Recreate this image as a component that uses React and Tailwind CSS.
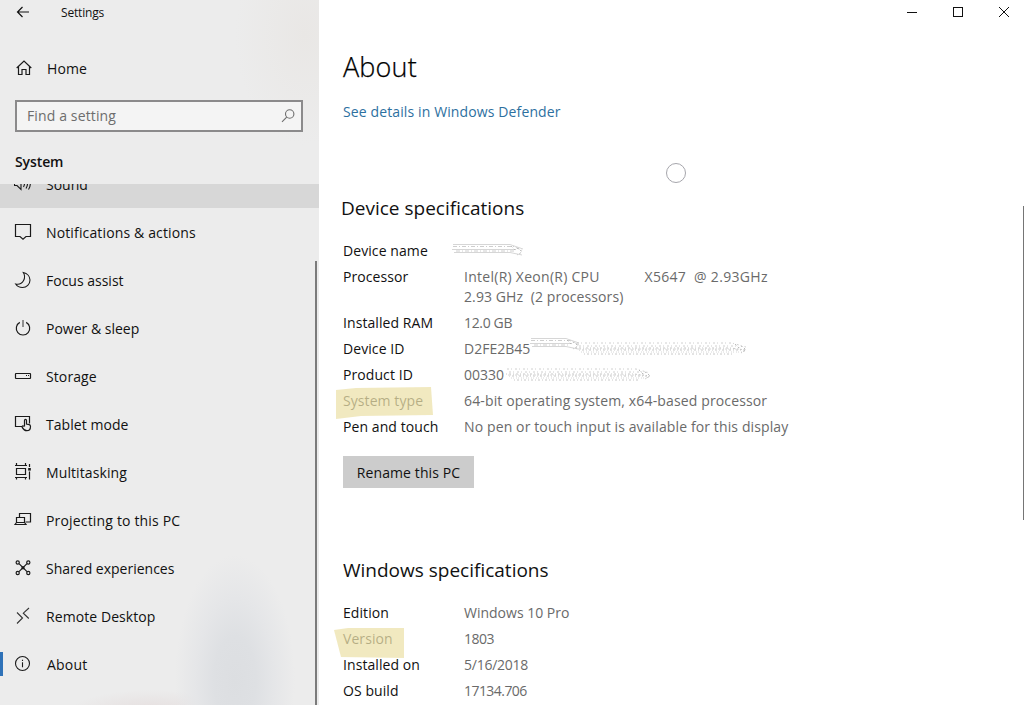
import React from "react";

function Icon({ children, className = "" }) {
  return (
    <svg
      viewBox="0 0 18 18"
      className={`h-[18px] w-[18px] shrink-0 ${className}`}
      fill="none"
      stroke="#1a1a1a"
      strokeWidth="1"
    >
      {children}
    </svg>
  );
}

const icons = {
  sound: (
    <Icon>
      <path d="M.5 6.500h2.500l4-4v12l-4-4H.5zM9.500 12c1.200-2 1.200-4.200 0-6M12 13.500c1.900-3 1.900-6.500 0-9.500M14.500 14.500c2.300-3.700 2.300-8 0-11.500" strokeWidth="1.100" />
    </Icon>
  ),
  notifications: (
    <Icon>
      <path d="M1.500 1.500h15v12h-4.500l-3 2.800-3-2.800h-4.500z" strokeWidth="1.200" />
    </Icon>
  ),
  focus: (
    <Icon>
      <path d="M9.300 1.500c4 .8 6.700 4 6.700 7.600 0 4.200-3.400 7.400-7.500 7.400-2.900 0-5.400-1.300-6.800-3.500 3.200.6 6.300-.5 7.900-3.500 1.400-2.700 1.200-5.700-.3-8z" strokeWidth="1.100" />
    </Icon>
  ),
  power: (
    <Icon>
      <path d="M9 1v7" stroke="#777" strokeWidth="1.600" />
      <path d="M5.800 3.400a6.700 6.700 0 1 0 6.400 0" strokeWidth="1.200" />
    </Icon>
  ),
  storage: (
    <Icon>
      <rect x="1.500" y="6.500" width="15" height="5" strokeWidth="1.200" rx=".5" />
      <path d="M12 8.500h1M14 8.500h1" strokeWidth="1.200" />
    </Icon>
  ),
  tablet: (
    <Icon>
      <path d="M8.500 11.500h-7v-10h14v7" strokeWidth="1.200" />
      <path d="M10.500 11V5.500c0-1.500 2-1.500 2 0V9l2.700.6c1 .3 1.300.9 1.300 1.800 0 2.600-.9 4.300-3.700 4.300-2.500 0-3.300-1-4.600-3.300-.5-1.300.7-2 1.400-1.200z" fill="#ececec" strokeWidth="1.200" />
    </Icon>
  ),
  multitasking: (
    <Icon>
      <path d="M1 2.500h12M2.500 0v2.500M11.500 0v2.500M2.500 5.500h9v6h-9zM1 14.500h12M2.500 14.500v2M11.500 14.500v2M15.500 1v3M15.500 8.500v8" strokeWidth="1.200" />
      <rect x="14.200" y="5" width="2.600" height="2.600" fill="#1a1a1a" stroke="none" />
    </Icon>
  ),
  projecting: (
    <Icon>
      <path d="M5.500 6V2.500h11v8.500h-5" strokeWidth="1.200" />
      <path d="M2.500 11.500V6.500h8v5M1 13.500l1.500-2h8l1.500 2z" strokeWidth="1.200" />
    </Icon>
  ),
  shared: (
    <Icon>
      <path d="M5 4.700l8 8M13 4.700l-8 8" strokeWidth="1.200" />
      <circle cx="3.700" cy="3.500" r="1.600" strokeWidth="1.200" />
      <circle cx="14.300" cy="3.500" r="1.600" strokeWidth="1.200" />
      <circle cx="3.700" cy="14" r="1.600" strokeWidth="1.200" />
      <circle cx="14.300" cy="14" r="1.600" strokeWidth="1.200" />
      <rect x="7.500" y="7.300" width="3" height="3" fill="#1a1a1a" stroke="none" />
    </Icon>
  ),
  remote: (
    <Icon>
      <path d="M3 5.500l5.500 5.500L3 16.500M15 1L9.300 6.200l5.500 5.300" stroke="#333" strokeWidth="1.100" />
    </Icon>
  ),
  about: (
    <Icon>
      <circle cx="8.500" cy="8.500" r="7" strokeWidth="1.100" />
      <path d="M8.500 7.300v5M8.500 4.800v1.200" strokeWidth="1.100" />
    </Icon>
  ),
};

const navItems = [
  { icon: "sound", label: "Sound", tone: "bg-[#d7d7d7]", tracking: "" },
  { icon: "notifications", label: "Notifications & actions", tracking: "tracking-[0.140px]" },
  { icon: "focus", label: "Focus assist", tracking: "" },
  { icon: "power", label: "Power & sleep", tracking: "" },
  { icon: "storage", label: "Storage", tracking: "tracking-[0.100px]" },
  { icon: "tablet", label: "Tablet mode", tracking: "tracking-[0.050px]" },
  { icon: "multitasking", label: "Multitasking", tracking: "tracking-[0.100px]" },
  { icon: "projecting", label: "Projecting to this PC", tracking: "tracking-[0.170px]" },
  { icon: "shared", label: "Shared experiences", tracking: "" },
  { icon: "remote", label: "Remote Desktop", tracking: "tracking-[0.080px]" },
  { icon: "about", label: "About", active: true, tracking: "tracking-[0.200px]" },
];

function NavItem({ icon, label, tone = "", active, tracking }) {
  return (
    <li className={`flex h-12 shrink-0 items-center ${tone}`}>
      <span className={`h-6 w-[3px] ${active ? "bg-[#2f72b8]" : ""}`} />
      <span className="ml-[11px] flex">{icons[icon]}</span>
      <span className={`whitespace-nowrap ${active ? "ml-[15px]" : "ml-3.5"} ${tracking}`}>{label}</span>
    </li>
  );
}

function Sidebar() {
  return (
    <aside className="relative flex w-[319px] shrink-0 flex-col overflow-hidden bg-[#ececec] bg-[radial-gradient(ellipse_60px_125px_at_235px_680px,#dcdee1_0%,#dee0e3_35%,#e5e6e8_65%,#ebebeb00_100%),radial-gradient(ellipse_80px_22px_at_150px_712px,#e5dede_0%,#ececec00_100%),radial-gradient(ellipse_70px_110px_at_305px_35px,#e9e7e5_0%,#ececec00_100%)]">
      <div className="flex h-[26px] items-center pl-[15px]">
        <svg viewBox="0 0 16 16" className="h-4 w-4 -translate-y-px" fill="none" stroke="#111" strokeWidth="1.200">
          <path d="M14 8H2.500M7.500 3L2.500 8l5 5" />
        </svg>
        <span className="ml-[30px] text-[12px] tracking-[-0.180px]">Settings</span>
      </div>
      <div className="mt-[18px] flex h-12 items-center pl-[15px]">
        <Icon>
          <path d="M1.700 9L9 2l7.300 7M3.500 7.500v8h3.500v-5h4v5h3.500v-8" strokeWidth="1.200" />
        </Icon>
        <span className="ml-3.5 tracking-[0.100px]">Home</span>
      </div>
      <div className="ml-[15px] mt-2 flex h-8 w-72 shrink-0 items-center justify-between border-2 border-[#8b8a8b] bg-[#f4f4f4] pl-2.5 pr-[5px] text-[#6d6d6d]">
        <span className="pb-0.5 tracking-[0.130px]">Find a setting</span>
        <svg viewBox="0 0 16 16" className="h-4 w-4" fill="none" stroke="#6d6d6d" strokeWidth="1.100">
          <circle cx="9.700" cy="6" r="4.200" />
          <path d="M6.700 9.200L2 13.900" />
        </svg>
      </div>
      <div className="mt-5 h-5 pl-[15px] font-semibold leading-5 tracking-[-0.100px]">System</div>
      <nav className="mt-3 flex-1 overflow-hidden">
        <ul className="-mt-6 flex flex-col">
          {navItems.map((item) => (
            <NavItem key={item.label} {...item} />
          ))}
        </ul>
      </nav>
      <div className="absolute bottom-0 right-[2px] top-[261px] w-[2px] bg-[#7b7b7b]" />
    </aside>
  );
}

/* Hand-scribbled redaction strokes over private values */
function Scribble({ width, lines, className = "" }) {
  const w = width;
  return (
    <svg viewBox={`0 0 ${w} 18`} width={w} height="18" className={`shrink-0 ${className}`} fill="none" strokeWidth=".8">
      {lines === "solid" ? (
        <>
          <path d={`M1 3.500H${w - 14}L${w - 1} 8M0 8.500H${w - 8}M2 11.500H${w - 14}L${w - 2} 14`} stroke="#cccccc" />
          <path d={`M1 5.500H${w - 10}L${w - 1} 10M4 10H${w - 10}`} stroke="#c2c2c2" strokeDasharray="4 2 1 2" />
          <path d={`M${w - 13} 5l4 4 3-2 4 4-5 3`} stroke="#b0b0b0" strokeDasharray="2 2" />
        </>
      ) : (
        <>
          <path d={`M1 4H${w - 16}L${w - 2} 8M3 7H${w - 9}`} stroke="#c4c4c4" strokeDasharray="2 2 1 3" />
          <path d={`M0 9H${w - 18}L${w - 2} 11M3 11H${w - 3}M8 15H${w - 14}`} stroke="#bababa" strokeDasharray="1 2 2 2" />
          <path d={`M2 10H${w - 8}M5 13H${w - 5}`} stroke="#cecece" strokeDasharray="1 1 1 2" />
          <path d={`M${w - 13} 5l4 4 3-2 4 4-5 3`} stroke="#a8a8a8" strokeDasharray="2 2" />
        </>
      )}
    </svg>
  );
}

function Row({ label, children, highlight, tracking = "" }) {
  return (
    <div className="flex items-start leading-5">
      <dt className="relative w-[121px] shrink-0 whitespace-nowrap tracking-[0.080px]">
        {label}
        {highlight}
      </dt>
      <dd className={`flex h-full whitespace-pre text-[#6a6a6a] ${tracking}`}>{children}</dd>
    </div>
  );
}

function Main() {
  return (
    <main className="relative min-w-0 flex-1 overflow-hidden bg-white pl-6">
      <div className="flex h-[26px] items-center justify-end gap-[34px] pr-3.5">
        <svg viewBox="0 0 12 12" className="h-3 w-3" stroke="#111">
          <path d="M1 5.500h10" />
        </svg>
        <svg viewBox="0 0 12 12" className="h-3 w-3 -translate-y-px" fill="none" stroke="#111">
          <rect x="1.500" y="1.500" width="9" height="9" />
        </svg>
        <svg viewBox="0 0 12 12" className="h-3 w-3 -translate-y-px" stroke="#111">
          <path d="M1 1l10 10M11 1L1 11" />
        </svg>
      </div>
      <h1 className="mt-[21px] h-10 text-[27px] font-light leading-10 tracking-[0.150px] text-black [-webkit-text-stroke:0.25px_black]">About</h1>
      <a className="mt-[15px] block h-5 leading-5 tracking-[0.120px] text-[#2d709f]">See details in Windows Defender</a>
      <div className="mt-[41px] flex h-5 pl-[323px]">
        <span className="h-5 w-5 rounded-full border border-[#a6a6ac]" />
      </div>
      <h2 className="-ml-[2px] mt-[11px] h-7 text-[19px] leading-7">Device specifications</h2>
      <dl className="mt-[19px] flex flex-col gap-1.5">
        <Row label="Device name">
          <Scribble width={72} lines="solid" className="-ml-[12px]" />
        </Row>
        <Row label="Processor">
          <div>
            <div className="flex">
              <span className="w-[180.5px] tracking-[0.270px]">Intel(R) Xeon(R) CPU</span>
              <span className="tracking-[0.310px]">{"X5647  @ 2.93GHz"}</span>
            </div>
            <div className="tracking-[0.100px]">{"2.93 GHz  (2 processors)"}</div>
          </div>
        </Row>
        <Row label="Installed RAM" tracking="tracking-[-0.350px]">12.0 GB</Row>
        <Row label="Device ID">
          D2FE2B45
          <Scribble width={50} lines="solid" className="-mt-1" />
          <Scribble width={172} lines="dots" className="-ml-1" />
        </Row>
        <Row label="Product ID">
          00330
          <Scribble width={146} lines="dots" className="ml-0.5" />
        </Row>
        <Row
          label="System type"
          tracking="tracking-[0.140px]"
          highlight={
            <svg viewBox="0 0 98 33" className="absolute -left-[7px] -top-1 h-[33px] w-[98px]">
              <path d="M0 3L20 1 95 0 97 28 25 29 0 32z" fill="#ece1ab" fillOpacity=".75" />
            </svg>
          }
        >
          64-bit operating system, x64-based processor
        </Row>
        <Row label="Pen and touch" tracking="tracking-[0.120px]">No pen or touch input is available for this display</Row>
      </dl>
      <button className="mt-[19px] block h-8 w-[131px] bg-[#cccccc] text-center tracking-[0.100px]">Rename this PC</button>
      <h2 className="mt-[68px] h-7 text-[19px] leading-7">Windows specifications</h2>
      <dl className="mt-[19px] flex flex-col gap-1.5">
        <Row label="Edition">Windows 10 Pro</Row>
        <Row
          label="Version"
          tracking="tracking-[-0.500px]"
          highlight={
            <svg viewBox="0 0 70 31" className="absolute -left-[9px] -top-px h-[31px] w-[70px]">
              <path d="M0 2L14 0H70V30L7 29z" fill="#ece1ab" fillOpacity=".75" />
            </svg>
          }
        >
          1803
        </Row>
        <Row label="Installed on" tracking="tracking-[-0.250px]">5/16/2018</Row>
        <Row label="OS build" tracking="tracking-[-0.550px]">17134.706</Row>
      </dl>
      <div className="absolute right-0 top-[206px] h-[314px] w-px bg-[#757575]" />
    </main>
  );
}

export default function App() {
  return (
    <div className="flex h-[705px] w-[1024px] overflow-hidden font-['Open_Sans','Noto_Sans',sans-serif] text-[14px] text-[#111]">
      <Sidebar />
      <Main />
    </div>
  );
}
